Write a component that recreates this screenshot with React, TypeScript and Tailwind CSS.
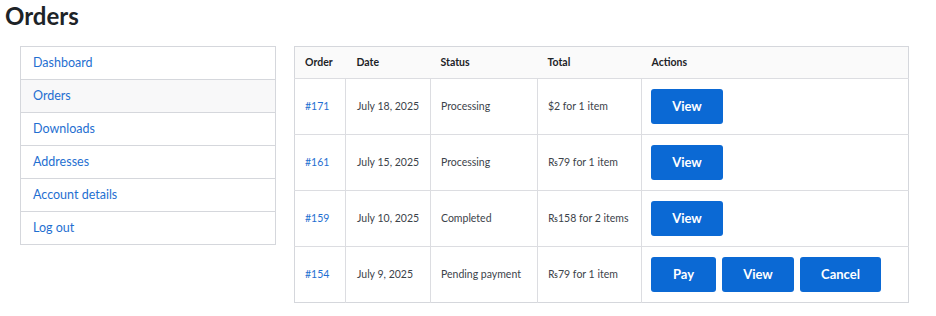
const navItems = ["Dashboard", "Orders", "Downloads", "Addresses", "Account details", "Log out"];

type Order = {
  id: string;
  date: string;
  status: string;
  total: string;
  actions: { label: string; w: string }[];
};

const orders: Order[] = [
  { id: "#171", date: "July 18, 2025", status: "Processing", total: "$2 for 1 item", actions: [{ label: "View", w: "w-[72px]" }] },
  { id: "#161", date: "July 15, 2025", status: "Processing", total: "₨79 for 1 item", actions: [{ label: "View", w: "w-[72px]" }] },
  { id: "#159", date: "July 10, 2025", status: "Completed", total: "₨158 for 2 items", actions: [{ label: "View", w: "w-[72px]" }] },
  {
    id: "#154",
    date: "July 9, 2025",
    status: "Pending payment",
    total: "₨79 for 1 item",
    actions: [
      { label: "Pay", w: "w-[65px]" },
      { label: "View", w: "w-[72px]" },
      { label: "Cancel", w: "w-[81px]" },
    ],
  },
];

export default function App() {
  return (
    <div className="h-[316px] w-[936px] bg-white font-['Lato',sans-serif] text-[#3c434a]">
      <h1 className="px-[5px] pt-[1px] text-[24px] leading-[30px] font-bold text-[#1d2327]">Orders</h1>

      <div className="mt-[15px] flex items-start gap-[18px] pl-[20px]">
        <nav className="w-[256px] border border-[#d5d7dc]">
          {navItems.map((item, i) => (
            <div
              key={item}
              className={`flex items-center px-[12px] text-[12.5px] text-[#1f6fd1] ${
                i > 0 ? "h-[33px] border-t border-[#d5d7dc]" : "h-[32px]"
              } ${item === "Orders" ? "bg-[#f8f8f9]" : ""}`}
            >
              {item}
            </div>
          ))}
        </nav>

        <table className="w-[615px] table-fixed border-collapse border border-[#d5d7dc] text-[10.5px]">
          <colgroup>
            <col className="w-[51px]" />
            <col className="w-[85px]" />
            <col className="w-[107px]" />
            <col className="w-[104px]" />
            <col />
          </colgroup>
          <thead>
            <tr className="h-[32px] bg-[#fafafa] text-left font-bold text-[#1d2327]">
              <th className="pl-[10px]">Order</th>
              <th className="pl-[11px]">Date</th>
              <th className="pl-[10px]">Status</th>
              <th className="pl-[10px]">Total</th>
              <th className="pl-[10px]">Actions</th>
            </tr>
          </thead>
          <tbody>
            {orders.map((o) => (
              <tr key={o.id} className="h-[56px] border-t border-[#dcdde1]">
                <td className="pl-[10px] text-[#1f6fd1]">{o.id}</td>
                <td className="border-l border-[#dcdde1] pl-[11px]">{o.date}</td>
                <td className="border-l border-[#dcdde1] pl-[10px]">{o.status}</td>
                <td className="border-l border-[#dcdde1] pl-[10px]">{o.total}</td>
                <td className="border-l border-[#dcdde1] pl-[9px]">
                  <div className="flex gap-[6px]">
                    {o.actions.map((a) => (
                      <button
                        key={a.label}
                        className={`h-[35px] ${a.w} rounded-[3px] bg-[#0b69d4] text-[13px] font-bold text-white`}
                      >
                        {a.label}
                      </button>
                    ))}
                  </div>
                </td>
              </tr>
            ))}
          </tbody>
        </table>
      </div>
    </div>
  );
}
